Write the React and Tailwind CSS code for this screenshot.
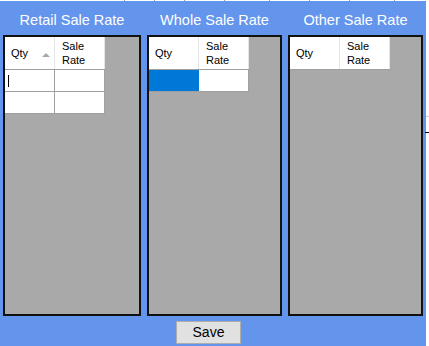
import React from 'react';

const font = { fontFamily: '"Liberation Sans", Arial, sans-serif' };

const ticks = [124, 154, 184, 224, 269, 309, 349, 394];

// Grid header with the two columns
const GridHeader = ({ sorted }) => (
  <div className="flex h-[33px] bg-white border-b border-[#a0a0a0] text-[11px] leading-[14px] text-black">
    <div className="relative flex w-[50px] items-center border-r border-[#e5e5e5] pl-[6px]">
      Qty
      {sorted && (
        <span className="absolute left-[37px] top-[16px] h-0 w-0 border-x-[4px] border-b-[4px] border-x-transparent border-b-[#a7a7a7]" />
      )}
    </div>
    <div className="flex w-[50px] items-center border-r border-[#e5e5e5] pl-[7px]">
      <span>
        Sale
        <br />
        Rate
      </span>
    </div>
  </div>
);

const GridRow = ({ cursor, selected }) => (
  <div className="flex h-[22px] bg-white border-b border-[#a0a0a0]">
    <div
      className={
        selected
          ? 'w-[50px] bg-[#0078d7]'
          : 'relative w-[50px] border-r border-[#a0a0a0]'
      }
    >
      {cursor && <span className="absolute left-[3px] top-[5px] h-[12px] w-px bg-black" />}
    </div>
    <div className="w-[50px] border-r border-[#a0a0a0]" />
  </div>
);

const RatePanel = ({ title, width, children }) => (
  <div className="flex flex-col" style={{ width }}>
    <div className="flex h-[34px] items-center justify-center pt-[5px] text-[14.5px] text-white">
      {title}
    </div>
    <div className="h-[281px] border-2 border-[#111111] bg-[#a9a9a9]">
      <div className="w-[100px]">{children}</div>
    </div>
  </div>
);

export default function App() {
  return (
    <div className="relative h-[346px] w-[429px] overflow-hidden bg-white" style={font}>
      {ticks.map((x) => (
        <span key={x} className="absolute top-0 h-[1px] w-px bg-[#9a9a9a]" style={{ left: x }} />
      ))}
      <div className="mt-[1px] h-[345px] w-[426px] bg-[#6495ed]">
        <div className="flex gap-[6px] pl-[3px]">
          <RatePanel title="Retail Sale Rate" width={138}>
            <GridHeader sorted />
            <GridRow cursor />
            <GridRow />
          </RatePanel>
          <RatePanel title="Whole Sale Rate" width={135}>
            <GridHeader />
            <GridRow selected />
          </RatePanel>
          <RatePanel title="Other Sale Rate" width={135}>
            <GridHeader />
          </RatePanel>
        </div>
        <div className="pl-[176px] pt-[5px]">
          <button className="flex h-[23px] w-[65px] items-center justify-center border border-[#adadad] bg-[#e1e1e1] text-[14px] text-black">
            Save
          </button>
        </div>
      </div>
      {/* strip of the window behind, on the right edge */}
      <div className="absolute right-0 top-0 h-[132px] w-[3px] bg-white">
        <div className="mt-[116px] h-px bg-[#d0d0d0]" />
      </div>
      <div className="absolute right-0 top-[132px] h-px w-[4px] bg-black" />
    </div>
  );
}
